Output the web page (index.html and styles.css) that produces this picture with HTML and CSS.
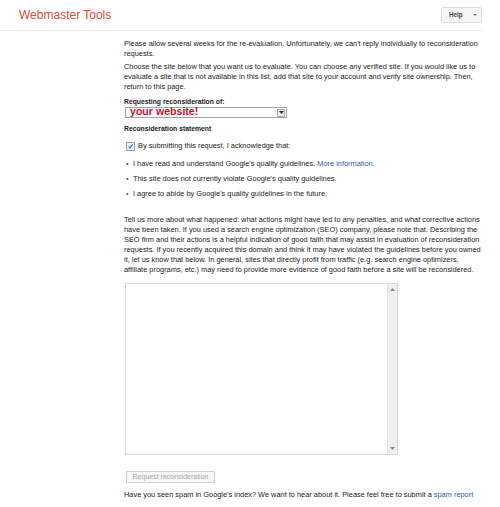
FILE: index.html
```html
<!DOCTYPE html>
<html>
<head>
<meta charset="utf-8">
<link rel="stylesheet" href="styles.css">
</head>
<body>
<header class="topbar">
  <div class="brand">Webmaster Tools</div>
  <div class="help">Help <span class="caret"></span></div>
</header>
<main class="content">
  <p class="para">Please allow several weeks for the re-evaluation. Unfortunately, we can't reply individually to reconsideration requests.</p>
  <p class="para p2">Choose the site below that you want us to evaluate. You can choose any verified site. If you would like us to evaluate a site that is not available in this list, add that site to your account and verify site ownership. Then, return to this page.</p>
  <div class="label">Requesting reconsideration of:</div>
  <div class="select">
    <span class="site">your website!</span>
    <span class="sel-btn"><svg width="5" height="3" viewBox="0 0 5 3"><path d="M0 0h5L2.5 3z" fill="#333"/></svg></span>
  </div>
  <div class="label statement">Reconsideration statement</div>
  <div class="check-row">
    <span class="checkbox"><svg width="9" height="9" viewBox="0 0 9 9"><path d="M2 4.5l1.8 2L7.2 1.8" fill="none" stroke="#3b5fa8" stroke-width="1.3"/></svg></span>
    <span>By submitting this request, I acknowledge that:</span>
  </div>
  <ul class="bullets">
    <li>I have read and understand Google's quality guidelines. <a class="link" href="#">More information.</a></li>
    <li>This site does not currently violate Google's quality guidelines.</li>
    <li>I agree to abide by Google's quality guidelines in the future.</li>
  </ul>
  <p class="para p3">Tell us more about what happened: what actions might have led to any penalties, and what corrective actions have been taken. If you used a search engine optimization (SEO) company, please note that. Describing the SEO firm and their actions is a helpful indication of good faith that may assist in evaluation of reconsideration requests. If you recently acquired this domain and think it may have violated the guidelines before you owned it, let us know that below. In general, sites that directly profit from traffic (e.g. search engine optimizers, affiliate programs, etc.) may need to provide more evidence of good faith before a site will be reconsidered.</p>
  <div class="textarea">
    <div class="ta-body"></div>
    <div class="scrollbar">
      <svg width="5" height="3" viewBox="0 0 5 3"><path d="M0 3h5L2.5 0z" fill="#888"/></svg>
      <svg width="5" height="3" viewBox="0 0 5 3"><path d="M0 0h5L2.5 3z" fill="#888"/></svg>
    </div>
  </div>
  <div class="btn">Request reconsideration</div>
  <p class="para footer">Have you seen spam in Google's index? We want to hear about it. Please feel free to submit a <a class="link" href="#">spam report</a></p>
</main>
</body>
</html>
```
FILE: styles.css
```css
html, body {
  margin: 0;
  padding: 0;
  background: #fff;
}
body {
  font-family: "Liberation Sans", Arial, sans-serif;
  color: #222;
  width: 500px;
}
.topbar {
  display: flex;
  align-items: center;
  justify-content: space-between;
  height: 31px;
  width: 482px;
  border-bottom: 1px solid #e8e8e8;
  box-sizing: border-box;
}
.brand {
  margin-left: 19px;
  font-size: 12px;
  color: #dd4b39;
}
.help {
  display: flex;
  align-items: center;
  justify-content: space-between;
  width: 41px;
  height: 16px;
  box-sizing: border-box;
  padding: 0 4px 0 7px;
  margin-top: -1px;
  border: 1px solid #dcdcdc;
  border-radius: 2px;
  background: #f5f5f5;
  font-size: 6.3px;
  font-weight: bold;
  color: #444;
}
.caret {
  width: 0;
  height: 0;
  border-left: 2px solid transparent;
  border-right: 2px solid transparent;
  border-top: 2px solid #777;
}
.content {
  margin-left: 124px;
  width: 358px;
  padding-top: 8px;
  font-size: 7.4px;
  line-height: 10px;
}
.para {
  margin: 0;
}
.p2 {
  margin-top: 3px;
}
.label {
  margin-top: 5px;
  font-weight: bold;
  font-size: 6.8px;
}
.select {
  display: flex;
  align-items: center;
  justify-content: space-between;
  width: 162px;
  height: 11px;
  box-sizing: border-box;
  margin-left: 1px;
  border: 1px solid #a5a5a5;
  background: #fff;
}
.site {
  margin-left: 4px;
  margin-top: -3px;
  font-size: 10.6px;
  line-height: 10px;
  font-weight: bold;
  color: #c8102e;
}
.sel-btn {
  display: flex;
  align-items: center;
  justify-content: center;
  width: 8px;
  height: 8px;
  margin-right: 1px;
  border: 1px solid #aaa;
  background: #eee;
  box-sizing: border-box;
}
.statement {
  margin-top: 6px;
}
.check-row {
  display: flex;
  align-items: center;
  gap: 3px;
  margin-top: 7px;
  margin-left: 2px;
}
.checkbox {
  display: flex;
  align-items: center;
  justify-content: center;
  width: 9px;
  height: 9px;
  box-sizing: border-box;
  border: 1px solid #8ea6c8;
  background: #e8eef8;
}
.bullets {
  list-style: none;
  margin: 8px 0 0 0;
  padding: 0;
}
.bullets li {
  position: relative;
  padding-left: 9px;
  margin-bottom: 5px;
}
.bullets li:last-child {
  margin-bottom: 0;
}
.bullets li::before {
  content: "•";
  position: absolute;
  left: 2px;
  color: #555;
}
.link {
  color: #2a5db0;
  text-decoration: none;
}
.p3 {
  margin-top: 16px;
}
.textarea {
  display: flex;
  width: 273px;
  height: 172px;
  margin-top: 8px;
  margin-left: 1px;
  box-sizing: border-box;
  border: 1px solid #d8d8d8;
}
.ta-body {
  flex: 1;
}
.scrollbar {
  width: 9px;
  background: #efefef;
  border-left: 1px solid #e2e2e2;
  display: flex;
  flex-direction: column;
  justify-content: space-between;
  align-items: center;
  padding: 4px 0;
}
.btn {
  width: 89px;
  height: 12px;
  box-sizing: border-box;
  margin-top: 16px;
  margin-left: 2px;
  border: 1px solid #d0d0d0;
  background: #f7f7f7;
  color: #a8a8a8;
  font-size: 7px;
  line-height: 10px;
  text-align: center;
}
.footer {
  margin-top: 7px;
}
```
